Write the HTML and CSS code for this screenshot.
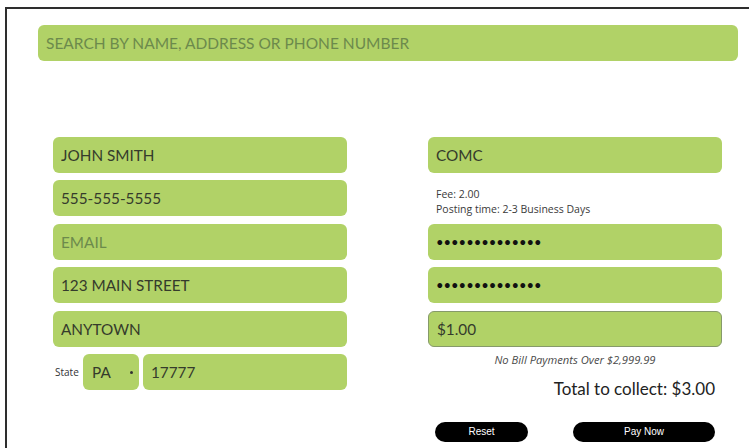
FILE: index.html
```html
<!DOCTYPE html>
<html lang="en">
<head>
<meta charset="utf-8">
<title>Bill Payment</title>
<link rel="stylesheet" href="styles.css">
</head>
<body>
<div class="frame">
  <input class="field search" type="text" placeholder="SEARCH BY NAME, ADDRESS OR PHONE NUMBER">

  <div class="columns">
    <div class="col">
      <input class="field" type="text" value="JOHN SMITH">
      <input class="field" type="text" value="555-555-5555">
      <input class="field" type="text" placeholder="EMAIL">
      <input class="field" type="text" value="123 MAIN STREET">
      <input class="field" type="text" value="ANYTOWN">
      <div class="state-row">
        <span class="state-label">State</span>
        <div class="select-wrap">
          <select class="field select">
            <option>PA</option>
          </select>
        </div>
        <input class="field zip" type="text" value="17777">
      </div>
    </div>

    <div class="col">
      <input class="field" type="text" value="COMC">
      <div class="fee">
        <div>Fee: 2.00</div>
        <div>Posting time: 2-3 Business Days</div>
      </div>
      <input class="field secret" type="password" value="12345678901234">
      <input class="field secret" type="password" value="12345678901234">
      <input class="field amount" type="text" value="$1.00">
      <div class="limit">No Bill Payments Over $2,999.99</div>
      <div class="total">Total to collect: $3.00</div>
      <div class="actions">
        <button class="btn reset" type="button">Reset</button>
        <button class="btn pay" type="button">Pay Now</button>
      </div>
    </div>
  </div>
</div>
</body>
</html>
```

FILE: styles.css
```css
html, body {
  margin: 0;
  padding: 0;
  overflow: hidden;
  background: #ffffff;
}

body {
  font-family: Lato, "Open Sans", sans-serif;
  color: #333;
}

/* open-ended frame: only the top and left edges fall inside the window */
.frame {
  margin: 7px 0 0 5px;
  width: 744px;
  height: 441px;
  box-sizing: border-box;
  border-top: 2px solid #2e2e2e;
  border-left: 2px solid #2e2e2e;
  padding-top: 16px;
}

.field {
  display: block;
  box-sizing: border-box;
  width: 100%;
  height: 36px;
  margin: 0;
  padding: 0 8px;
  border: none;
  border-radius: 6px;
  background: #b1d267;
  font-family: Lato, sans-serif;
  font-weight: 400;
  font-size: 15.3px;
  color: #353b2c;
  outline: none;
  -webkit-appearance: none;
  appearance: none;
}

.field::placeholder {
  color: #6c8a4c;
  opacity: 1;
}

.search {
  width: 700px;
  margin-left: 31px;
  font-size: 15.5px;
}

.columns {
  display: flex;
  gap: 81px;
  margin-top: 76px;
  padding-left: 46px;
}

.col {
  width: 294px;
  display: flex;
  flex-direction: column;
  gap: 7.4px;
}

.state-row {
  display: flex;
  align-items: center;
  gap: 4px;
}

.state-label {
  font-family: "Open Sans", sans-serif;
  font-size: 10px;
  color: #333;
  width: 24px;
  margin-left: 2px;
}

.select-wrap {
  position: relative;
  width: 56px;
  flex: none;
}

.select-wrap::after {
  content: "";
  position: absolute;
  right: 6px;
  top: 17px;
  width: 3px;
  height: 3px;
  border-radius: 50%;
  background: #333;
  pointer-events: none;
}

.select {
  padding-left: 9px;
  cursor: pointer;
}

.zip {
  flex: 1;
  padding-left: 8px;
}

.fee {
  font-family: "Open Sans", sans-serif;
  font-size: 10.5px;
  line-height: 15px;
  color: #3a3a3a;
  padding: 7px 0 0 8px;
  height: 36px;
  box-sizing: border-box;
}

.secret {
  font-size: 13px;
  letter-spacing: 0;
  color: #111;
}

.amount {
  border: 1px solid #869a6a;
  padding-left: 8px;
}

.limit {
  margin-top: -1px;
  text-align: center;
  font-family: "Open Sans", sans-serif;
  font-style: italic;
  font-weight: 400;
  font-size: 11.2px;
  line-height: 14px;
  color: #4a4a4a;
}

.total {
  margin-top: 4px;
  text-align: right;
  padding-right: 7px;
  font-size: 17px;
  line-height: 22px;
  color: #222;
}

.actions {
  display: flex;
  justify-content: space-between;
  padding: 0 7px;
  margin-top: 14px;
}

.btn {
  height: 20px;
  border: none;
  border-radius: 10px;
  background: #000;
  color: #fff;
  font-family: "Liberation Sans", Arial, sans-serif;
  font-size: 10px;
  padding: 0;
  cursor: pointer;
}

.reset {
  width: 93px;
}

.pay {
  width: 142px;
}
```
